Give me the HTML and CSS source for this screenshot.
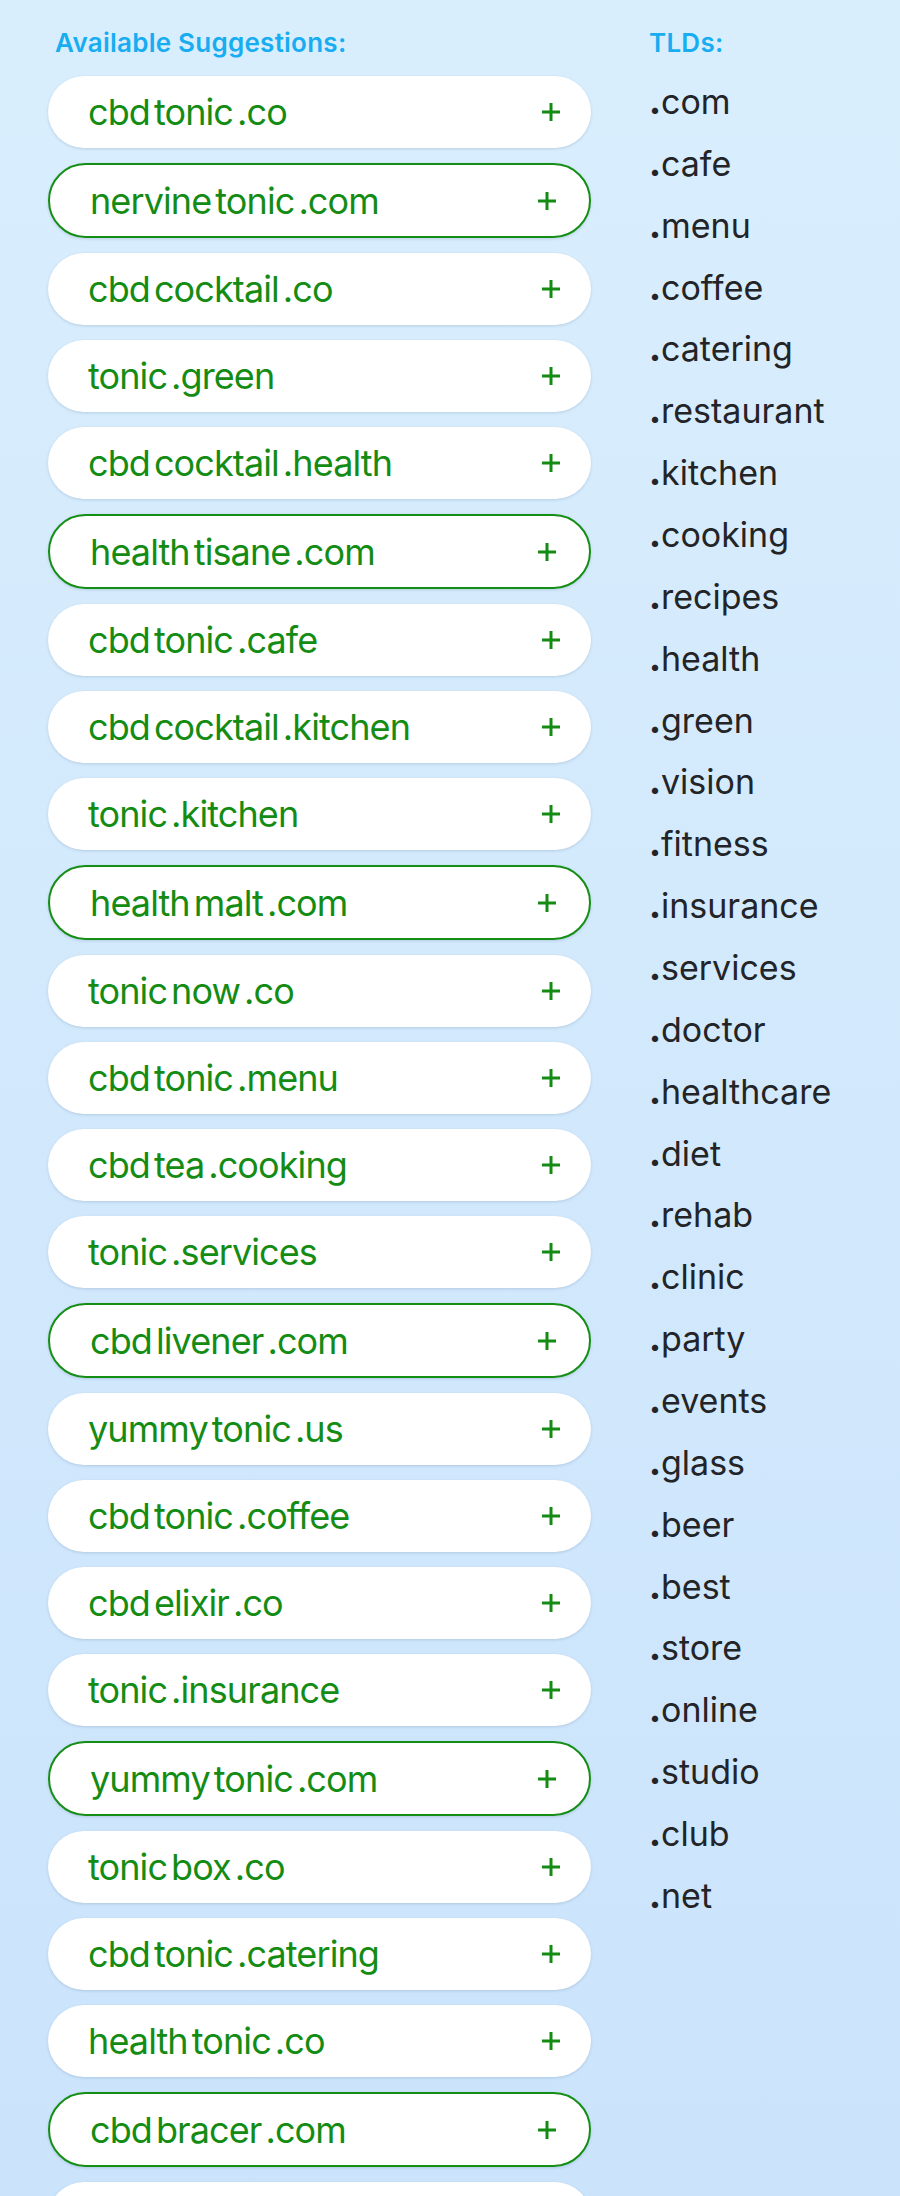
FILE: index.html
```html
<!DOCTYPE html>
<html lang="en">
<head>
<meta charset="utf-8">
<title>Suggestions</title>
<link rel="stylesheet" href="styles.css">
</head>
<body>
<main class="layout">
  <section class="suggestions">
    <h2 class="heading heading-left">Available Suggestions:</h2>
    <ul class="pills">
      <li class="pill"><span class="name"><span>cbd</span><span>tonic</span><span>.co</span></span><svg class="plus" viewBox="0 0 18 18"><path d="M9 0V18M0 9H18"/></svg></li>
      <li class="pill pill-com"><span class="name"><span>nervine</span><span>tonic</span><span>.com</span></span><svg class="plus" viewBox="0 0 18 18"><path d="M9 0V18M0 9H18"/></svg></li>
      <li class="pill"><span class="name"><span>cbd</span><span>cocktail</span><span>.co</span></span><svg class="plus" viewBox="0 0 18 18"><path d="M9 0V18M0 9H18"/></svg></li>
      <li class="pill"><span class="name"><span>tonic</span><span>.green</span></span><svg class="plus" viewBox="0 0 18 18"><path d="M9 0V18M0 9H18"/></svg></li>
      <li class="pill"><span class="name"><span>cbd</span><span>cocktail</span><span>.health</span></span><svg class="plus" viewBox="0 0 18 18"><path d="M9 0V18M0 9H18"/></svg></li>
      <li class="pill pill-com"><span class="name"><span>health</span><span>tisane</span><span>.com</span></span><svg class="plus" viewBox="0 0 18 18"><path d="M9 0V18M0 9H18"/></svg></li>
      <li class="pill"><span class="name"><span>cbd</span><span>tonic</span><span>.cafe</span></span><svg class="plus" viewBox="0 0 18 18"><path d="M9 0V18M0 9H18"/></svg></li>
      <li class="pill"><span class="name"><span>cbd</span><span>cocktail</span><span>.kitchen</span></span><svg class="plus" viewBox="0 0 18 18"><path d="M9 0V18M0 9H18"/></svg></li>
      <li class="pill"><span class="name"><span>tonic</span><span>.kitchen</span></span><svg class="plus" viewBox="0 0 18 18"><path d="M9 0V18M0 9H18"/></svg></li>
      <li class="pill pill-com"><span class="name"><span>health</span><span>malt</span><span>.com</span></span><svg class="plus" viewBox="0 0 18 18"><path d="M9 0V18M0 9H18"/></svg></li>
      <li class="pill"><span class="name"><span>tonic</span><span>now</span><span>.co</span></span><svg class="plus" viewBox="0 0 18 18"><path d="M9 0V18M0 9H18"/></svg></li>
      <li class="pill"><span class="name"><span>cbd</span><span>tonic</span><span>.menu</span></span><svg class="plus" viewBox="0 0 18 18"><path d="M9 0V18M0 9H18"/></svg></li>
      <li class="pill"><span class="name"><span>cbd</span><span>tea</span><span>.cooking</span></span><svg class="plus" viewBox="0 0 18 18"><path d="M9 0V18M0 9H18"/></svg></li>
      <li class="pill"><span class="name"><span>tonic</span><span>.services</span></span><svg class="plus" viewBox="0 0 18 18"><path d="M9 0V18M0 9H18"/></svg></li>
      <li class="pill pill-com"><span class="name"><span>cbd</span><span>livener</span><span>.com</span></span><svg class="plus" viewBox="0 0 18 18"><path d="M9 0V18M0 9H18"/></svg></li>
      <li class="pill"><span class="name"><span>yummy</span><span>tonic</span><span>.us</span></span><svg class="plus" viewBox="0 0 18 18"><path d="M9 0V18M0 9H18"/></svg></li>
      <li class="pill"><span class="name"><span>cbd</span><span>tonic</span><span>.coffee</span></span><svg class="plus" viewBox="0 0 18 18"><path d="M9 0V18M0 9H18"/></svg></li>
      <li class="pill"><span class="name"><span>cbd</span><span>elixir</span><span>.co</span></span><svg class="plus" viewBox="0 0 18 18"><path d="M9 0V18M0 9H18"/></svg></li>
      <li class="pill"><span class="name"><span>tonic</span><span>.insurance</span></span><svg class="plus" viewBox="0 0 18 18"><path d="M9 0V18M0 9H18"/></svg></li>
      <li class="pill pill-com"><span class="name"><span>yummy</span><span>tonic</span><span>.com</span></span><svg class="plus" viewBox="0 0 18 18"><path d="M9 0V18M0 9H18"/></svg></li>
      <li class="pill"><span class="name"><span>tonic</span><span>box</span><span>.co</span></span><svg class="plus" viewBox="0 0 18 18"><path d="M9 0V18M0 9H18"/></svg></li>
      <li class="pill"><span class="name"><span>cbd</span><span>tonic</span><span>.catering</span></span><svg class="plus" viewBox="0 0 18 18"><path d="M9 0V18M0 9H18"/></svg></li>
      <li class="pill"><span class="name"><span>health</span><span>tonic</span><span>.co</span></span><svg class="plus" viewBox="0 0 18 18"><path d="M9 0V18M0 9H18"/></svg></li>
      <li class="pill pill-com"><span class="name"><span>cbd</span><span>bracer</span><span>.com</span></span><svg class="plus" viewBox="0 0 18 18"><path d="M9 0V18M0 9H18"/></svg></li>
      <li class="pill pill-cut" aria-hidden="true"></li>
    </ul>
  </section>
  <section class="tlds">
    <h2 class="heading">TLDs:</h2>
    <ul class="tld-list">
      <li><b>.</b>com</li><li><b>.</b>cafe</li><li><b>.</b>menu</li><li><b>.</b>coffee</li><li><b>.</b>catering</li>
      <li><b>.</b>restaurant</li><li><b>.</b>kitchen</li><li><b>.</b>cooking</li><li><b>.</b>recipes</li><li><b>.</b>health</li>
      <li><b>.</b>green</li><li><b>.</b>vision</li><li><b>.</b>fitness</li><li><b>.</b>insurance</li><li><b>.</b>services</li>
      <li><b>.</b>doctor</li><li><b>.</b>healthcare</li><li><b>.</b>diet</li><li><b>.</b>rehab</li><li><b>.</b>clinic</li>
      <li><b>.</b>party</li><li><b>.</b>events</li><li><b>.</b>glass</li><li><b>.</b>beer</li><li><b>.</b>best</li>
      <li><b>.</b>store</li><li><b>.</b>online</li><li><b>.</b>studio</li><li><b>.</b>club</li><li><b>.</b>net</li>
    </ul>
  </section>
</main>
</body>
</html>
```

FILE: styles.css
```css
html, body {
  margin: 0;
  padding: 0;
}

body {
  height: 100vh;
  overflow: hidden;
  background: linear-gradient(180deg, #d9eefd 0%, #cbe4fc 100%);
  font-family: Inter, "Noto Sans", "Liberation Sans", sans-serif;
}

.layout {
  display: grid;
  grid-template-columns: 543px 1fr;
  column-gap: 58px;
  padding: 27px 0 0 48px;
}

.heading {
  margin: 0;
  font-size: 26px;
  line-height: 32px;
  font-weight: 600;
  color: #17adf0;
  letter-spacing: 0.25px;
}

.heading-left {
  padding-left: 7px;
}

.pills {
  list-style: none;
  margin: 17px 0 0;
  padding: 0;
  display: flex;
  flex-direction: column;
  gap: 15px;
}

.pill {
  box-sizing: border-box;
  height: 72px;
  flex: none;
  display: flex;
  align-items: center;
  justify-content: space-between;
  padding: 0 31px 0 40px;
  background: #ffffff;
  border-radius: 38px;
  box-shadow: 0 1px 3px rgba(40, 70, 110, 0.18);
  color: #148c14;
}

.pill-com {
  height: 75px;
  border: 2px solid #158e15;
  padding: 0 33px 0 40px;
}

.name {
  display: flex;
  font-size: 36px;
  line-height: 44px;
  letter-spacing: -0.9px;
}

.name span + span {
  margin-left: 4px;
}

.plus {
  width: 18px;
  height: 18px;
  flex: none;
}

.plus path {
  stroke: #148c14;
  stroke-width: 3;
  fill: none;
}

.tlds {
  display: flex;
  flex-direction: column;
}

.tld-list {
  list-style: none;
  margin: 12px 0 0;
  padding: 0;
}

.tld-list li {
  font-size: 34px;
  line-height: 61.86px;
  height: 61.86px;
  color: #232427;
}

.tld-list b {
  font-weight: 800;
}
```
